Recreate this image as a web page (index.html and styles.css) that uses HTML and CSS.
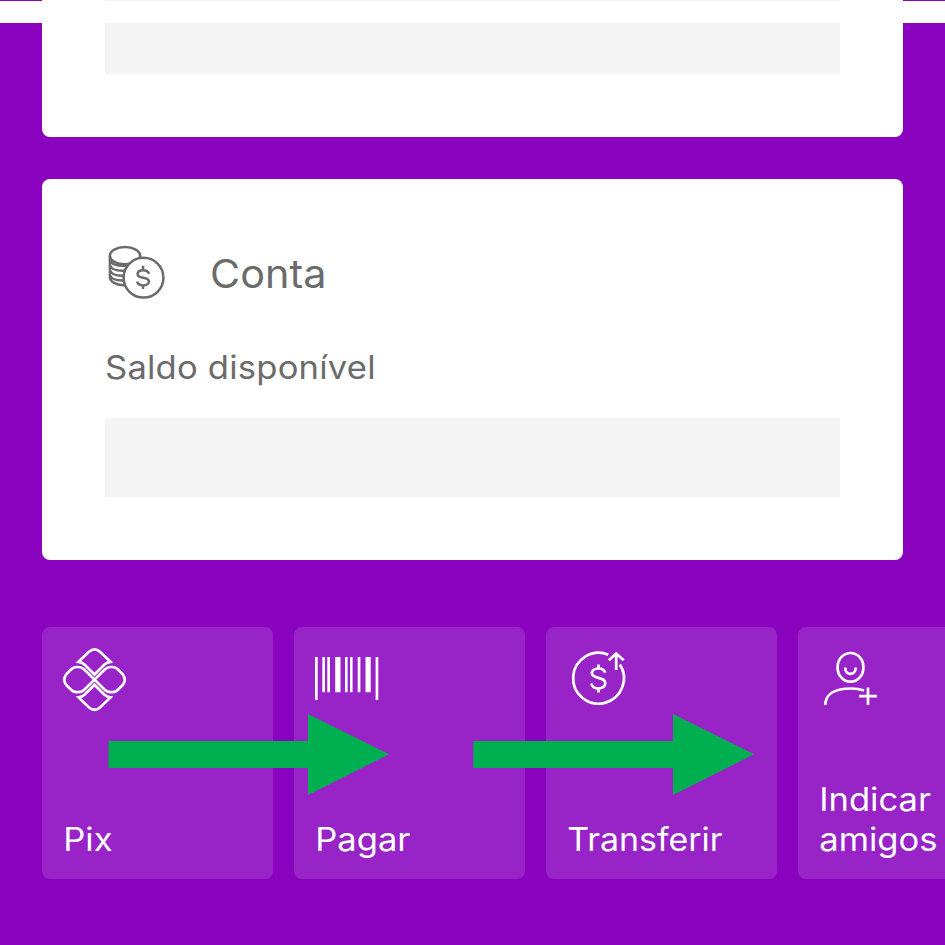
FILE: index.html
```html
<!DOCTYPE html>
<html lang="pt-BR">
<head>
<meta charset="utf-8">
<title>Conta</title>
<link rel="stylesheet" href="styles.css">
</head>
<body>
<main class="screen">
  <section class="card card-top">
    <div class="placeholder"></div>
  </section>
  <div class="divider"></div>

  <section class="card account">
    <header class="account-header">
      <svg class="coins" width="63" height="63" viewBox="105 242 63 63">
        <ellipse cx="125" cy="255.700" rx="15.100" ry="8.600"/>
        <path d="M109.900 256V277C109.900 281.500 115 284.900 124 285.200M140.100 255.500V259M109.900 260C111 264 117 266.500 126 265.600M109.900 265C111 269 116 271 124 270.800M109.900 270C111 274 116 275.900 123 275.800M109.900 275C111 278.500 116 280.600 123 280.500"/>
        <circle class="coin" cx="143.500" cy="277.700" r="19.900"/>
        <path d="M143 266v4.500M143 284.500v4.500M149 273.700c-.8-2.200-3-3.400-5.800-3.400-3.400 0-5.600 1.500-5.600 3.900 0 5 11.300 2.300 11.300 7.200 0 2.400-2.400 4-5.700 4-3.200 0-5.500-1.400-6.200-3.700"/>
      </svg>
      <h1 class="title">Conta</h1>
    </header>
    <p class="balance-label">Saldo disponível</p>
    <div class="placeholder"></div>
  </section>

  <nav class="actions">
    <a class="tile">
      <svg class="icon" width="74" height="70" viewBox="60 645 74 70">
        <path d="M78.500 661.800L89 651.700Q94.500 647.200 100 651.700L110.500 661.800Q107 662.300 104.500 664.500L94.500 674.500L84.500 664.500Q82 662.300 78.500 661.800ZM78.500 697.400L89 707.500Q94.500 712 100 707.500L110.500 697.400Q107 696.900 104.500 694.700L94.500 684.700L84.500 694.700Q82 696.900 78.500 697.400Z"/>
        <path d="M94.500 679.600L84 669.200Q81.700 667 78.300 667H76.500Q73.500 667 71.300 669.200L66.300 674.200Q62.300 679.600 66.300 685L71.300 690Q73.500 692.200 76.500 692.200H78.300Q81.700 692.200 84 690ZM94.500 679.600L105 669.200Q107.300 667 110.700 667H112.500Q115.500 667 117.700 669.200L122.700 674.200Q126.700 679.600 122.700 685L117.700 690Q115.500 692.200 112.500 692.200H110.700Q107.300 692.200 105 690Z"/>
      </svg>
      <span class="label pix">Pix</span>
    </a>
    <a class="tile">
      <svg class="icon bars" width="74" height="70" viewBox="312 645 74 70">
        <path d="M315 657h2.700v43H315zM322.300 657h2.700v35.300h-2.700zM327.300 657h2.700v35.300h-2.700zM335.200 657h5.300v35.300h-5.300zM345 657h2.600v35.300H345zM350 657h2.600v35.300H350zM357.700 657h2.700v35.300h-2.700zM365.500 657h5.200v35.300h-5.200zM375.600 657h2.700v43h-2.700z"/>
      </svg>
      <span class="label pagar">Pagar</span>
    </a>
    <a class="tile">
      <svg class="icon" width="74" height="70" viewBox="564 645 74 70">
        <path d="M608.300 654.800A25.400 25.400 0 1 0 619.900 664.500M616.200 670V654M608.800 660.300L616.200 653.500L623.600 660.300"/>
        <path d="M598.500 664.500v4M598.500 688.500v4M605.300 672.700c-1-2.600-3.400-4.200-6.800-4.200-4 0-6.600 1.900-6.600 4.800 0 6.200 13.400 3 13.400 9.800 0 3.200-2.800 5.400-6.800 5.400s-6.500-2-7.300-5"/>
      </svg>
      <span class="label transferir">Transferir</span>
    </a>
    <a class="tile">
      <svg class="icon" width="74" height="70" viewBox="816 645 74 70">
        <rect x="837.600" y="653" width="25.800" height="28.700" rx="12.900" ry="14"/>
        <path d="M845.200 667.500c0 8.500 10.500 8.500 10.500 0M825.300 705C825.300 694 835 688.500 851 688.500Q858.500 688.500 864 690.500M868 687.500V705M859 696.200H877"/>
      </svg>
      <span class="label indicar">Indicar<br>amigos</span>
    </a>
  </nav>

  <svg class="arrow arrow-first" width="281" height="81" viewBox="0 0 281 81"><path d="M0.500 27H200V0L281 40.300L200 81V54H0.500Z"/></svg>
  <svg class="arrow arrow-second" width="281" height="81" viewBox="0 0 281 81"><path d="M0.300 27H200V0L281 40.300L200 81V54H0.300Z"/></svg>
</main>
</body>
</html>
```
FILE: styles.css
```css
* { box-sizing: border-box; }
body {
  margin: 0;
  font-family: Inter, "Liberation Sans", sans-serif;
}
.screen {
  position: relative;
  width: 945px;
  height: 945px;
  overflow: hidden;
  background: #8a03be;
}
.card {
  width: 861px;
  margin: 0 42px;
  padding: 0 63px;
  background: #fff;
  border-radius: 8px;
  color: #6b6b6b;
}
.card-top {
  height: 137px;
  border-radius: 0 0 8px 8px;
}
.card-top .placeholder { height: 74px; }
.placeholder {
  height: 79px;
  background: #f4f4f4;
}
.divider {
  position: absolute;
  top: 1px;
  left: 0;
  width: 100%;
  height: 22px;
  background: #fff;
}
.account {
  height: 381px;
  margin-top: 42px;
  padding-top: 63px;
}
.account-header {
  display: flex;
  align-items: center;
  height: 63px;
}
.title {
  margin: 0 0 0 42px;
  font-size: 39px;
  font-weight: 400;
  line-height: 63px;
  transform: scaleX(1.06);
  transform-origin: left;
}
.balance-label {
  margin: 42px 0 29px;
  font-size: 32px;
  line-height: 42px;
  letter-spacing: .2px;
  transform: scaleX(1.08);
  transform-origin: left;
}
.actions {
  display: flex;
  gap: 21px;
  width: 1029px;
  margin: 67px 0 0 42px;
}
.tile {
  display: flex;
  flex: 0 0 231px;
  flex-direction: column;
  justify-content: space-between;
  height: 252px;
  padding: 18px 18px 20px;
  border-radius: 8px;
  background: #9823c6;
  color: #fff;
}
.label {
  padding-left: 3px;
  font-size: 32px;
  line-height: 39.5px;
  white-space: nowrap;
  transform: scaleX(1.08);
  transform-origin: left;
}
.transferir { transform: scaleX(1.06); }
.coins, .icon {
  display: block;
  flex: none;
  fill: none;
  stroke: #6b6b6b;
  stroke-width: 2.5;
}
.coin { fill: #fff; }
.icon {
  stroke: #fff;
  stroke-width: 2.7;
}
.bars {
  fill: #fff;
  stroke: none;
}
.arrow {
  position: absolute;
  top: 714px;
  fill: #00b050;
}
.arrow-first { left: 108px; }
.arrow-second { left: 473px; }
```
